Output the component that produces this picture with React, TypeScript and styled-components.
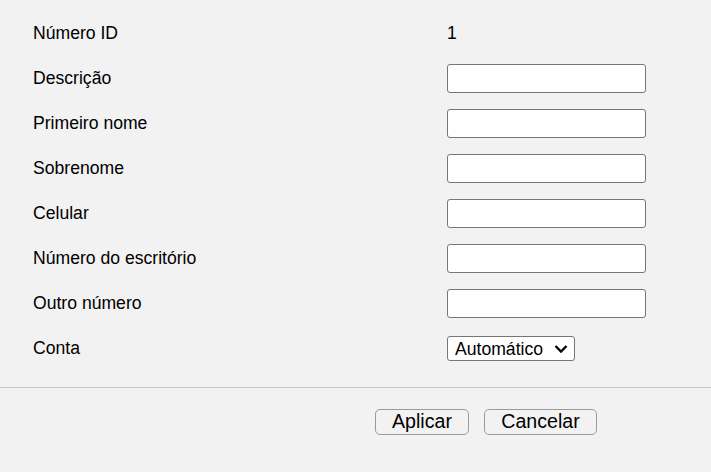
import { Fragment } from "react";
import styled, { createGlobalStyle } from "styled-components";

const GlobalStyle = createGlobalStyle`
  html, body {
    margin: 0;
    padding: 0;
    background: #f2f2f2;
  }
  body {
    font-family: "Liberation Sans", Arial, sans-serif;
    color: #000;
  }
`;

const Page = styled.div`
  width: 711px;
  height: 472px;
  background: #f2f2f2;
  padding-top: 11px;
  box-sizing: border-box;
`;

const Form = styled.div`
  display: grid;
  grid-template-columns: 414px 1fr;
  grid-auto-rows: 45px;
  padding-left: 33px;
`;

const Label = styled.div`
  display: flex;
  align-items: center;
  font-size: 17.6px;
`;

const Value = styled.div`
  display: flex;
  align-items: center;
  font-size: 17.6px;
`;

const TextInput = styled.input`
  width: 199px;
  height: 29px;
  box-sizing: border-box;
  border: 1px solid #767676;
  border-radius: 3px;
  background: #fff;
  font-family: inherit;
  font-size: 16px;
  padding: 0 4px;
  margin: 0;
`;

const SelectWrap = styled.span`
  position: relative;
  display: inline-flex;
`;

const Select = styled.select`
  appearance: none;
  width: 128px;
  height: 25px;
  box-sizing: border-box;
  border: 1px solid #767676;
  border-radius: 3px;
  background: #fff;
  font-family: "Liberation Sans", Arial, sans-serif;
  font-size: 17.6px;
  color: #000;
  padding: 0 0 0 7px;
  margin: 0;
`;

const Chevron = styled.svg`
  position: absolute;
  right: 7px;
  top: 8px;
  pointer-events: none;
`;

const Divider = styled.hr`
  margin: 16px 0 0;
  border: none;
  border-top: 1px solid #c8c8c8;
  height: 0;
`;

const Actions = styled.div`
  display: flex;
  justify-content: flex-end;
  gap: 15px;
  padding: 21px 114px 0 0;
`;

const Button = styled.button<{ $width: number }>`
  width: ${(p) => p.$width}px;
  height: 26px;
  box-sizing: border-box;
  border: 1px solid #9a9a9a;
  border-radius: 5px;
  background: #f2f2f2;
  font-family: "Liberation Sans", Arial, sans-serif;
  font-size: 19.6px;
  color: #000;
  padding: 0;
  line-height: 1;
`;

const fields = [
  "Descrição",
  "Primeiro nome",
  "Sobrenome",
  "Celular",
  "Número do escritório",
  "Outro número",
];

export default function App() {
  return (
    <Page>
      <GlobalStyle />
      <Form>
        <Label>Número ID</Label>
        <Value>1</Value>
        {fields.map((f) => (
          <Fragment key={f}>
            <Label>{f}</Label>
            <Value>
              <TextInput type="text" />
            </Value>
          </Fragment>
        ))}
        <Label>Conta</Label>
        <Value>
          <SelectWrap>
            <Select defaultValue="auto">
              <option value="auto">Automático</option>
            </Select>
            <Chevron width="14" height="10" viewBox="0 0 14 10">
              <path
                d="M1.5 2 L7 7.5 L12.5 2"
                fill="none"
                stroke="#000"
                strokeWidth="2.3"
              />
            </Chevron>
          </SelectWrap>
        </Value>
      </Form>
      <Divider />
      <Actions>
        <Button $width={94}>Aplicar</Button>
        <Button $width={113}>Cancelar</Button>
      </Actions>
    </Page>
  );
}
